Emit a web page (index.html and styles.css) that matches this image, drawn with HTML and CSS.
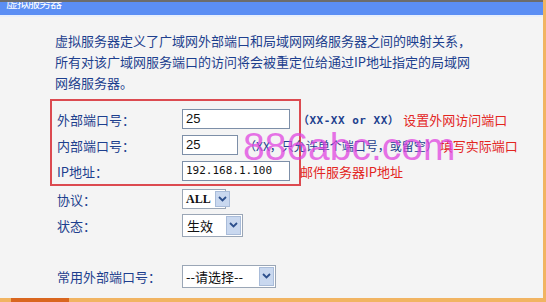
FILE: index.html
```html
<!DOCTYPE html>
<html lang="zh-CN">
<head>
  <meta charset="UTF-8" />
  <title>虚拟服务器</title>
  <link rel="stylesheet" href="styles.css">
</head>
<body>
  <div class="page">
    <div class="titlebar"><span>虚拟服务器</span></div>

    <div class="content">
      <p class="intro">虚拟服务器定义了广域网外部端口和局域网网络服务器之间的映射关系，<br>所有对该广域网服务端口的访问将会被重定位给通过IP地址指定的局域网<br>网络服务器。</p>

      <!-- port mapping fields -->
      <div class="highlight">
        <div class="row">
          <span class="label">外部端口号：</span>
          <span class="field wide">25</span>
          <span class="hint mono">（XX-XX or XX）</span>
          <span class="note">设置外网访问端口</span>
        </div>
        <div class="row">
          <span class="label">内部端口号：</span>
          <span class="field narrow">25</span>
          <span class="hint hint-2">（XX，只允许单个端口号，或留空）</span>
          <span class="note note-2">填写实际端口</span>
        </div>
        <div class="row">
          <span class="label">IP地址：</span>
          <span class="field wide mono">192.168.1.100</span>
          <span class="note note-3">邮件服务器IP地址</span>
        </div>
      </div>

      <div class="row plain">
        <span class="label">协议：</span>
        <span class="select sel-all"><span class="val mono">ALL</span><span class="arrow"><svg width="9" height="6" viewBox="0 0 9 6"><path d="M1 1 L4.5 4.5 L8 1" fill="none" stroke="#2c4f8c" stroke-width="1.8"/></svg></span></span>
      </div>
      <div class="row plain">
        <span class="label">状态：</span>
        <span class="select sel-state"><span class="val">生效</span><span class="arrow"><svg width="9" height="6" viewBox="0 0 9 6"><path d="M1 1 L4.5 4.5 L8 1" fill="none" stroke="#2c4f8c" stroke-width="1.8"/></svg></span></span>
      </div>
      <div class="row plain common">
        <span class="label">常用外部端口号：</span>
        <span class="select sel-common"><span class="val">--请选择--</span><span class="arrow"><svg width="9" height="6" viewBox="0 0 9 6"><path d="M1 1 L4.5 4.5 L8 1" fill="none" stroke="#2c4f8c" stroke-width="1.8"/></svg></span></span>
      </div>
    </div>

    <div class="watermark">886abc.com</div>
  </div>
  <div class="footer"><span></span></div>
</body>
</html>
```

FILE: styles.css
```css
html,body{margin:0;background:#f4f4f4;font-family:"Noto Sans CJK SC","Liberation Sans",sans-serif;font-size:13px;color:#1d3f8e}
.page{position:relative;width:543px;height:298px;border-right:3px solid #f1b462;overflow:hidden}

.titlebar{height:13px;border-top:2px solid #6c6c6c;border-bottom:2px solid #e8effb;background:#5b8ef4;color:#fff;font-size:12px;line-height:12px;padding-left:6px;overflow:hidden}
.titlebar span{display:block;margin-top:-5px;letter-spacing:-1px}

.content{padding:13px 0 0 50px}
.intro{margin:0 0 6px 5px;line-height:21px}

.highlight{width:242px;border:2px solid #dc4a50;padding:5px 0 0 5px}
.row{display:flex;align-items:center;height:26px;white-space:nowrap}
.row > *{flex:none}
.row.plain{padding-left:7px}
.row.common{margin-top:25px}
.label{width:125px}

.field{box-sizing:border-box;height:20px;border:1px solid #7d8fa8;background:#fff;padding:0 3px;line-height:18px;color:#111;font-family:"Liberation Sans",sans-serif}
.field.wide{width:108px}
.field.narrow{width:56px}
.mono{font-family:"DejaVu Sans Mono","Noto Sans CJK SC",monospace;font-size:11px}
.field.mono{font-size:11px}

.hint{margin-left:8px}
.hint.mono{font-size:11px;font-weight:bold;letter-spacing:0.5px}
.hint-2{margin-left:6px;font-size:12px}
.note{margin-left:4px;color:#e3261f}
.note-2{margin-left:2px}
.note-3{margin-left:10px}

.select{box-sizing:border-box;display:inline-flex;align-items:stretch;height:20px;border:1px solid #9aa6b6;background:#fff;color:#111}
.select .val{flex:1;padding:0 4px;line-height:18px}
.select .arrow{flex:none;width:15px;margin:1px;display:flex;align-items:center;justify-content:center;background:#c9d8ef;border:1px solid #a9bcd9;box-sizing:border-box}
.sel-all{width:44px}
.sel-all .val{font-family:"Liberation Serif",serif;font-weight:bold;font-size:12px;padding:0 3px}
.sel-state{width:61px;height:23px}
.sel-state .val{line-height:21px}
.sel-common{width:94px;height:23px}
.sel-common .val{line-height:21px;padding:0 3px}

.watermark{position:absolute;left:243px;top:127px;font-family:"Liberation Sans",sans-serif;font-size:39px;line-height:1;color:rgba(225,70,225,0.75)}

.footer{width:543px;height:4px;background:#f1b462;border-right:3px solid #f1b462}
.footer span{display:block;margin-left:11px;width:58px;height:4px;background:#d9661f}
```
